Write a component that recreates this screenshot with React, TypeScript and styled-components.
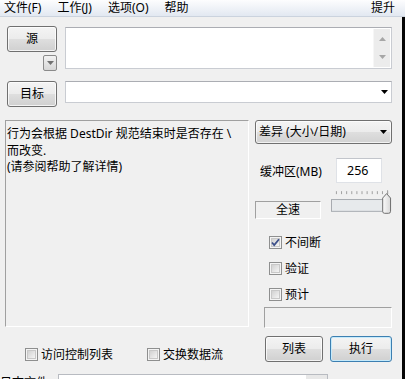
import React from 'react'
import styled, { createGlobalStyle } from 'styled-components'

const GlobalStyle = createGlobalStyle`
  html, body {
    margin: 0;
    padding: 0;
    background: #f0f0f0;
    overflow: hidden;
  }
  body {
    font-family: "Noto Sans", "Noto Sans CJK SC", sans-serif;
    font-size: 12px;
    color: #000;
  }
  * {
    box-sizing: border-box;
  }
`

const Screen = styled.div`
  width: 405px;
  height: 379px;
  overflow: hidden;
  display: flex;
  flex-direction: column;
  background: #f0f0f0;
`

const MenuBar = styled.div`
  flex: none;
  height: 17px;
  display: flex;
  align-items: center;
  gap: 16px;
  padding: 0 10px 1px 4px;
  background: linear-gradient(#fdfdfe, #e2e8f1);
  border-bottom: 1px solid #cbd3de;
  line-height: 15px;
`

const MenuItem = styled.span<{ $right?: boolean }>`
  margin-left: ${(p) => (p.$right ? 'auto' : '0')};
  white-space: nowrap;
`

const Body = styled.div`
  flex: 1;
  display: flex;
  min-height: 0;
`

const Strip = styled.div`
  width: 4px;
  flex: none;
  background: #050505;
`

const Content = styled.div`
  flex: 1;
  padding: 9px 10px 0 7px;
  display: flex;
  flex-direction: column;
`

const Row = styled.div<{ $top?: number }>`
  display: flex;
  gap: 8px;
  margin-top: ${(p) => p.$top || 0}px;
`

const PushButton = styled.div<{ $w?: number; $default?: boolean }>`
  width: ${(p) => p.$w || 50}px;
  height: 26px;
  flex: none;
  display: flex;
  align-items: center;
  justify-content: center;
  border: 1px solid ${(p) => (p.$default ? '#3c7fb1' : '#707070')};
  border-radius: 3px;
  background: linear-gradient(#f4f4f4 0%, #ececec 48%, #dedede 52%, #d0d0d0 100%);
  box-shadow: inset 0 0 0 1px ${(p) => (p.$default ? '#c5eafb' : 'rgba(255,255,255,0.75)')};
  line-height: 16px;
  font-size: 12px;
`

const SourceCol = styled.div`
  width: 50px;
  flex: none;
  display: flex;
  flex-direction: column;
  align-items: flex-end;
`

const MiniDrop = styled.div`
  width: 14px;
  height: 16px;
  margin-top: 3px;
  border: 1px solid #8a8a8a;
  border-radius: 2px;
  background: linear-gradient(#f2f2f2, #d6d6d6);
  display: flex;
  align-items: center;
  justify-content: center;
`

const SourceBox = styled.div`
  flex: 1;
  height: 42px;
  margin-top: 1px;
  background: #fff;
  border: 1px solid #c9ccd2;
  border-top-color: #abadb3;
  display: flex;
  justify-content: flex-end;
  padding: 1px;
`

const ScrollBar = styled.div`
  width: 17px;
  background: #ececec;
  border-left: 1px solid #f6f6f6;
  display: flex;
  flex-direction: column;
  justify-content: space-between;
  align-items: center;
  padding: 8px 0 8px;
`

const ComboField = styled.div`
  flex: 1;
  height: 22px;
  background: #fff;
  border: 1px solid #c9ccd2;
  border-top-color: #abadb3;
  display: flex;
  align-items: center;
  justify-content: flex-end;
  padding-right: 3px;
`

const MainRow = styled.div`
  display: flex;
  margin-top: 13px;
`

const LeftCol = styled.div`
  width: 244px;
  margin-left: -2px;
  flex: none;
  display: flex;
  flex-direction: column;
`

const InfoBox = styled.div`
  height: 207px;
  border: 1px solid;
  border-color: #a0a0a0 #ffffff #ffffff #a0a0a0;
  padding: 5px 1px 0 1px;
  line-height: 16.5px;
  white-space: pre;
`

const BottomChecks = styled.div`
  display: flex;
  margin-top: 21px;
  padding-left: 20px;
`

const CheckItem = styled.label<{ $w?: number }>`
  display: flex;
  align-items: center;
  gap: 3px;
  height: 13px;
  width: ${(p) => (p.$w ? `${p.$w}px` : 'auto')};
  line-height: 13px;
  white-space: nowrap;
`

const RightCol = styled.div`
  width: 137px;
  margin-left: 6px;
  flex: none;
  display: flex;
  flex-direction: column;
`

const ModeCombo = styled.div`
  height: 24px;
  border: 1px solid #707070;
  border-radius: 3px;
  background: linear-gradient(#f4f4f4 0%, #ececec 48%, #dedede 52%, #d2d2d2 100%);
  box-shadow: inset 0 0 0 1px rgba(255, 255, 255, 0.7);
  display: flex;
  align-items: center;
  justify-content: space-between;
  padding: 0 4px 0 3px;
  line-height: 16px;
`

const BufferRow = styled.div`
  display: flex;
  align-items: center;
  justify-content: space-between;
  margin-top: 14px;
  padding-left: 5px;
  padding-right: 10px;
`

const NumberField = styled.div`
  width: 46px;
  height: 25px;
  background: #fff;
  border: 1px solid #dfe2e7;
  border-top-color: #c2c5cb;
  display: flex;
  align-items: center;
  padding-left: 10px;
  line-height: 16px;
  font-size: 12.5px;
`

const SpeedRow = styled.div`
  display: flex;
  align-items: flex-start;
  margin-top: 4px;
`

const SpeedBox = styled.div`
  width: 67px;
  height: 18px;
  margin-top: 14px;
  margin-right: 10px;
  border: 1px solid;
  border-color: #a0a0a0 #ffffff #ffffff #a0a0a0;
  display: flex;
  align-items: center;
  justify-content: center;
  line-height: 16px;
`

const CheckList = styled.div`
  display: flex;
  flex-direction: column;
  gap: 13px;
  margin-top: 17px;
  padding-left: 14px;
`

const EmptyBox = styled.div`
  height: 21px;
  margin: 6px 0 0 9px;
  border: 1px solid;
  border-color: #a0a0a0 #ffffff #ffffff #a0a0a0;
`

const ButtonRow = styled.div`
  display: flex;
  gap: 7px;
  margin: 8px 0 0 10px;
`

const FileRow = styled.div`
  display: flex;
  align-items: flex-start;
  margin: 12px 0 0 -7px;
`

const FileLabel = styled.span`
  width: 58px;
  flex: none;
  line-height: 12px;
  padding-top: 3px;
`

const FileField = styled.div`
  width: 270px;
  height: 22px;
  background: linear-gradient(90deg, #fff 0, #fff 92%, #e8e8e8 92%);
  border: 1px solid #b8bbc1;
`

const Arrow = ({ up, color = '#000' }: { up?: boolean; color?: string }) => (
  <svg width="7" height="4" viewBox="0 0 7 4">
    <path d={up ? 'M0 4 L3.5 0 L7 4 Z' : 'M0 0 L7 0 L3.5 4 Z'} fill={color} />
  </svg>
)

const CheckBox = ({ checked }: { checked?: boolean }) => (
  <svg width="13" height="13" viewBox="0 0 13 13">
    <defs>
      <linearGradient id="cbg" x1="0" y1="0" x2="1" y2="1">
        <stop offset="0" stopColor="#cfcfcf" />
        <stop offset="1" stopColor="#f7f7f7" />
      </linearGradient>
    </defs>
    <rect x="0.5" y="0.5" width="12" height="12" fill="#f4f4f4" stroke="#8e8f8f" />
    <rect x="2.5" y="2.5" width="8" height="8" fill="url(#cbg)" stroke="#c8c8c8" />
    {checked && (
      <path d="M3 6.5 L5.2 9 L10 3.2" fill="none" stroke="#3d508a" strokeWidth="1.8" />
    )}
  </svg>
)

const Slider = () => {
  const ticks = Array.from({ length: 11 }, (_, i) => 5 + i * 5.2)
  return (
    <svg width="62" height="28" viewBox="0 0 62 28">
      <defs>
        <linearGradient id="thumb" x1="0" y1="0" x2="1" y2="0">
          <stop offset="0" stopColor="#fbfbfb" />
          <stop offset="1" stopColor="#d8d8d8" />
        </linearGradient>
      </defs>
      {ticks.map((x) => (
        <line key={x} x1={x + 0.5} y1="4" x2={x + 0.5} y2="7" stroke="#a0a0a0" />
      ))}
      <line x1="57.5" y1="3" x2="57.5" y2="7" stroke="#a0a0a0" />
      <rect x="0.5" y="12.5" width="56" height="12" fill="#e7eaec" stroke="#a7abb0" />
      <path
        d="M52.5 11 L56.5 6.5 L60.5 11 L60.5 24.5 Q60.5 26.5 58.5 26.5 L54.5 26.5 Q52.5 26.5 52.5 24.5 Z"
        fill="url(#thumb)"
        stroke="#6e6e6e"
      />
    </svg>
  )
}

export default function App() {
  return (
    <Screen>
      <GlobalStyle />
      <MenuBar>
        <MenuItem>文件(F)</MenuItem>
        <MenuItem>工作(J)</MenuItem>
        <MenuItem>选项(O)</MenuItem>
        <MenuItem>帮助</MenuItem>
        <MenuItem $right>提升</MenuItem>
      </MenuBar>
      <Body>
        <Content>
          <Row>
            <SourceCol>
              <PushButton>源</PushButton>
              <MiniDrop>
                <Arrow color="#707070" />
              </MiniDrop>
            </SourceCol>
            <SourceBox>
              <ScrollBar>
                <Arrow up color="#a6a6a6" />
                <Arrow color="#a6a6a6" />
              </ScrollBar>
            </SourceBox>
          </Row>
          <Row $top={10}>
            <PushButton>目标</PushButton>
            <ComboField>
              <Arrow />
            </ComboField>
          </Row>
          <MainRow>
            <LeftCol>
              <InfoBox>
                {'行为会根据 DestDir 规范结束时是否存在 \\\n而改变.\n(请参阅帮助了解详情)'}
              </InfoBox>
              <BottomChecks>
                <CheckItem $w={122}>
                  <CheckBox />
                  访问控制列表
                </CheckItem>
                <CheckItem>
                  <CheckBox />
                  交换数据流
                </CheckItem>
              </BottomChecks>
            </LeftCol>
            <RightCol>
              <ModeCombo>
                <span>差异 (大小/日期)</span>
                <Arrow />
              </ModeCombo>
              <BufferRow>
                <span>缓冲区(MB)</span>
                <NumberField>256</NumberField>
              </BufferRow>
              <SpeedRow>
                <SpeedBox>全速</SpeedBox>
                <Slider />
              </SpeedRow>
              <CheckList>
                <CheckItem>
                  <CheckBox checked />
                  不间断
                </CheckItem>
                <CheckItem>
                  <CheckBox />
                  验证
                </CheckItem>
                <CheckItem>
                  <CheckBox />
                  预计
                </CheckItem>
              </CheckList>
              <EmptyBox />
              <ButtonRow>
                <PushButton $w={58}>列表</PushButton>
                <PushButton $w={62} $default>
                  执行
                </PushButton>
              </ButtonRow>
            </RightCol>
          </MainRow>
          <FileRow>
            <FileLabel>日志文件</FileLabel>
            <FileField />
          </FileRow>
        </Content>
        <Strip />
      </Body>
    </Screen>
  )
}
